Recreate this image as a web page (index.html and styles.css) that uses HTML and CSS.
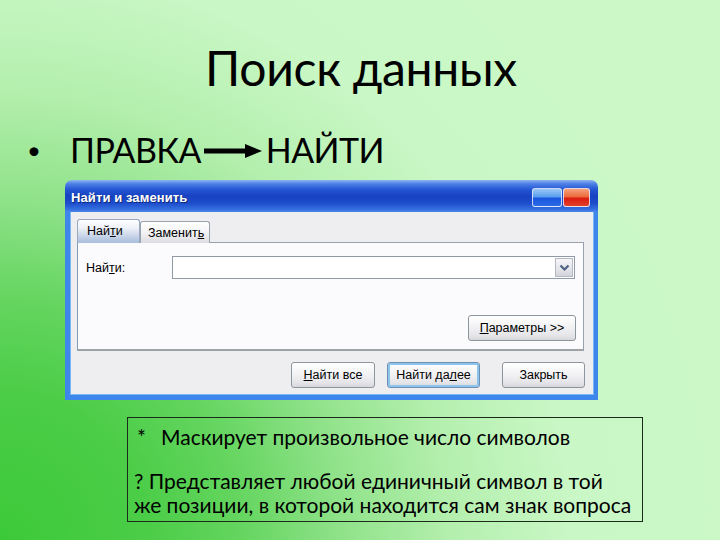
FILE: index.html
```html
<!DOCTYPE html>
<html lang="ru">
<head>
<meta charset="utf-8">
<title>Поиск данных</title>
<link rel="stylesheet" href="styles.css">
</head>
<body>
<div class="slide">
  <h1 class="title">Поиск данных</h1>
  <div class="bullet">
    <span class="dot">•</span>
    <span class="path">ПРАВКА<svg class="arrow" width="58" height="16" viewBox="0 0 58 16"><rect x="0" y="5.5" width="44" height="5" fill="#000"/><polygon points="41,1 58,8 41,15" fill="#000"/></svg>НАЙТИ</span>
  </div>

  <div class="window">
    <div class="titlebar">
      <span class="wtitle">Найти и заменить</span>
      <div class="wbtns"><span class="wbtn wmin"></span><span class="wbtn wclose"></span></div>
    </div>
    <div class="client">
      <div class="tabs">
        <div class="tab active">Най<u>т</u>и</div>
        <div class="tab">Заменит<u>ь</u></div>
      </div>
      <div class="panel">
        <div class="field">
          <span class="label">Най<u>т</u>и:</span>
          <div class="combo">
            <div class="combo-input"></div>
            <div class="combo-btn"><svg width="11" height="8" viewBox="0 0 11 8"><path d="M1.5 1.5 L5.5 5.5 L9.5 1.5" fill="none" stroke="#4d6185" stroke-width="2.2"/></svg></div>
          </div>
        </div>
        <div class="panel-actions">
          <span class="btn btn-params"><u>П</u>араметры &gt;&gt;</span>
        </div>
      </div>
      <div class="actions">
        <span class="btn btn-all"><u>Н</u>айти все</span>
        <span class="btn btn-next focused">Найти да<u>л</u>ее</span>
        <span class="btn btn-close">Закрыть</span>
      </div>
    </div>
  </div>

  <div class="note">
    <p class="note-line"><span class="sym">*</span>Маскирует произвольное число символов</p>
    <p class="note-para">? Представляет любой единичный символ в той<br>же позиции, в которой находится сам знак вопроса</p>
  </div>
</div>
</body>
</html>
```
FILE: styles.css
```css
html, body {
  margin: 0;
  padding: 0;
}

.slide {
  width: 720px;
  height: 540px;
  box-sizing: border-box;
  overflow: hidden;
  padding-top: 39px;
  font-family: Lato, "DejaVu Sans", sans-serif;
  color: #000;
  background:
    radial-gradient(circle at 0% 100%,
      #3cc938 0px,
      #4ccd48 150px,
      #64d55f 240px,
      #8fe289 340px,
      #b4efae 450px,
      #c9f7c5 570px,
      #ccf8c8 800px);
}

.title {
  margin: 0;
  font-size: 48px;
  font-weight: 400;
  line-height: 58px;
  text-align: center;
  padding-left: 2px;
  letter-spacing: -0.3px;
}

.bullet {
  margin-top: 31px;
  display: flex;
  align-items: center;
  height: 43px;
  font-size: 34px;
  line-height: 43px;
  letter-spacing: -0.6px;
}

.dot {
  width: 43px;
  margin-left: 27px;
  font-size: 24px;
}

.path {
  display: flex;
  align-items: center;
}

.arrow {
  margin: 2px 4px 0 3px;
}

/* ---------- Window ---------- */
.window {
  margin-top: 9px;
  margin-left: 65px;
  width: 533px;
  font-family: "Liberation Sans", Arial, sans-serif;
  font-size: 12.5px;
}

.titlebar {
  height: 32px;
  box-sizing: border-box;
  border-radius: 7px 7px 0 0;
  padding: 2px 8px 0 6px;
  display: flex;
  align-items: center;
  justify-content: space-between;
  background: linear-gradient(to bottom,
    #8fb4f2 0%,
    #4d80e6 12%,
    #2455d3 30%,
    #1842c0 50%,
    #1d4ccc 72%,
    #3570e0 92%,
    #4a86ea 100%);
}

.wtitle {
  color: #fff;
  font-weight: 700;
  font-size: 13px;
  text-shadow: 1px 1px 0 #0c2a7a;
  letter-spacing: 0.1px;
}

.wbtns {
  display: flex;
  gap: 1px;
  margin-top: 1px;
}

.wbtn {
  display: block;
  height: 19px;
  border: 1px solid rgba(230, 236, 250, 0.85);
  border-radius: 3px;
  box-sizing: border-box;
}

.wmin {
  width: 30px;
  background: linear-gradient(to bottom, #9cc8f6 0%, #5b9ef0 45%, #1b58e0 55%, #2d6ae6 100%);
}

.wclose {
  width: 27px;
  background: linear-gradient(to bottom, #f4a27c 0%, #ec6a3c 45%, #dc1c10 55%, #e0402a 100%);
}

.client {
  box-sizing: border-box;
  height: 188px;
  border-style: solid;
  border-color: #3f86ea;
  border-width: 0 4px 5px 5px;
  box-shadow: inset 1px 0 0 #78b8f6, inset -1px 0 0 #78b8f6, inset 0 -1px 0 #78b8f6;
  background: #eeeef1;
  padding: 7px 10px 0 7px;
}

.tabs {
  display: flex;
  align-items: flex-end;
  height: 24px;
  margin-bottom: -1px;
  position: relative;
  z-index: 1;
}

.tab {
  box-sizing: border-box;
  height: 22px;
  padding: 0 0 0 7px;
  display: flex;
  align-items: center;
  border: 1px solid #9aa3ad;
  border-bottom: none;
  border-radius: 3px 3px 0 0;
  background: linear-gradient(to bottom, #ffffff 0%, #f3f3f5 50%, #dcdce2 100%);
  width: 70px;
}

.tab.active {
  width: 63px;
  height: 24px;
  padding-left: 9px;
  padding-bottom: 2px;
  border-color: #98a8c0;
  background: linear-gradient(to bottom, #ffffff 0%, #eef1f7 35%, #c2d0e6 75%, #a9bddb 100%);
}

.panel {
  box-sizing: border-box;
  height: 109px;
  background: #fbfbfd;
  border-top: 1px solid #98a2ae;
  border-left: 1px solid #7f9db9;
  border-right: 1px solid #98a2ae;
  border-bottom: 2px solid #9ea3a8;
  padding: 13px 7px 8px 8px;
  display: flex;
  flex-direction: column;
}

.field {
  display: flex;
  align-items: center;
  height: 23px;
}

.label {
  width: 86px;
}

.combo {
  display: flex;
  width: 403px;
  height: 23px;
  box-sizing: border-box;
  border: 1px solid #8f9aa6;
  background: #fff;
  padding: 1px;
}

.combo-input {
  flex: 1;
}

.combo-btn {
  width: 18px;
  display: flex;
  align-items: center;
  justify-content: center;
  box-sizing: border-box;
  border: 1px solid #b4b8c0;
  background: linear-gradient(to bottom, #f6f6f8 0%, #e4e5ea 60%, #d2d4da 100%);
}

.panel-actions {
  margin-top: auto;
  display: flex;
  justify-content: flex-end;
}

.btn {
  box-sizing: border-box;
  height: 26px;
  display: flex;
  align-items: center;
  justify-content: center;
  border: 1px solid #8f959c;
  border-radius: 3px;
  background: linear-gradient(to bottom, #ffffff 0%, #f4f4f6 40%, #e6e6ea 80%, #d6d7dc 100%);
  color: #000;
}

.btn-params {
  width: 108px;
}

.actions {
  margin-top: 11px;
  display: flex;
  justify-content: flex-end;
  margin-right: -1px;
}

.btn-all {
  width: 84px;
}

.btn-next {
  width: 93px;
  margin-left: 12px;
}

.btn-close {
  width: 83px;
  margin-left: 22px;
}

.focused {
  border-color: #6e8fb0;
  box-shadow: inset 0 0 0 2px #8cc4ee;
}

/* ---------- Note ---------- */
.note {
  margin-top: 17px;
  margin-left: 127px;
  width: 516px;
  height: 105px;
  box-sizing: border-box;
  border: 1px solid #1c2a1c;
  padding: 7px 4px 0 6px;
  font-size: 21px;
  line-height: 24px;
  white-space: nowrap;
}

.note p {
  margin: 0;
}

.sym {
  display: inline-block;
  width: 27px;
  padding-left: 3px;
  box-sizing: border-box;
}

.note-para {
  margin-top: 20px !important;
}
```
